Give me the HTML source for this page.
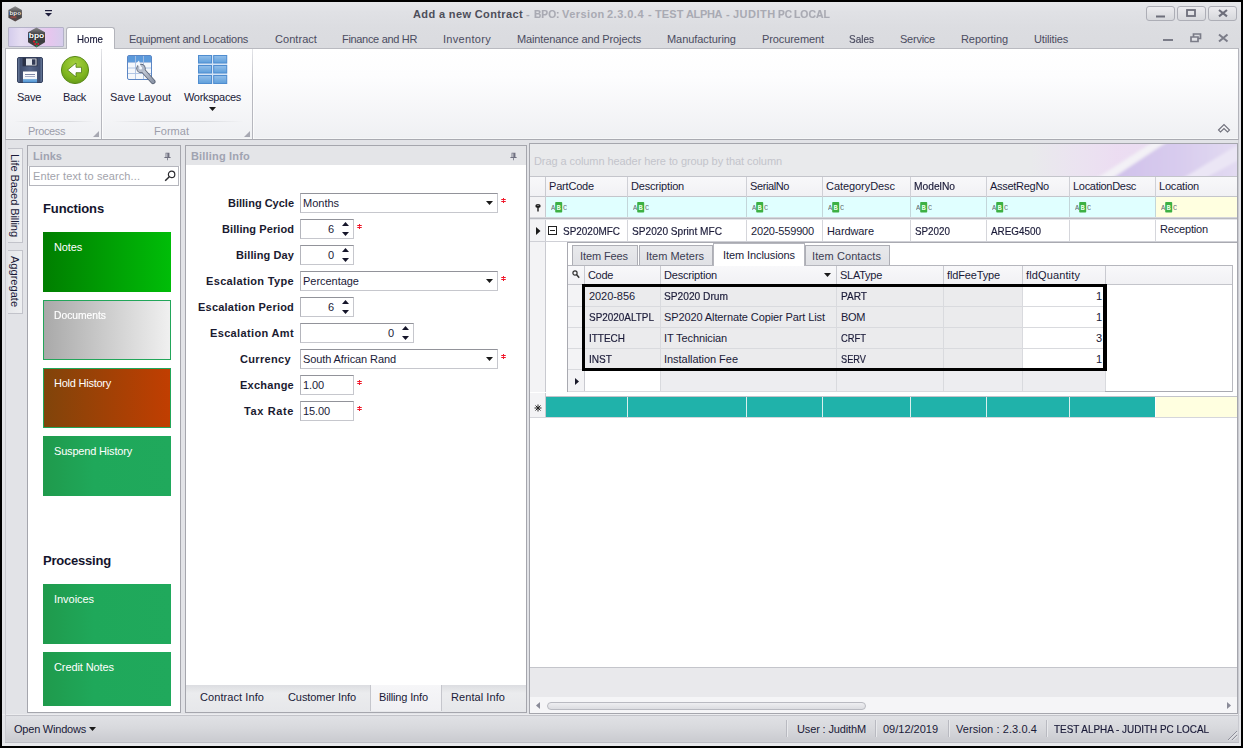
<!DOCTYPE html>
<html lang="en">
<head>
<meta charset="utf-8">
<title>Add a new Contract - BPO</title>
<style>
*{box-sizing:border-box;margin:0;padding:0}
html,body{width:1243px;height:748px;overflow:hidden}
body{background:#e2e3e7;font-family:"Liberation Sans",sans-serif;font-size:11px;line-height:13px;color:#1a1a38;position:relative}
section{position:absolute;left:0;top:0;width:1243px;height:748px}
div,span.t,svg{position:absolute}
.t{white-space:nowrap;line-height:13px}

</style>
</head>
<body>
<section id="frame">
<div style="left:0px;top:0px;width:1243px;height:2px;background:#000"></div>
<div style="left:0px;top:746px;width:1243px;height:2px;background:#000"></div>
<div style="left:0px;top:0px;width:2px;height:748px;background:#000"></div>
<div style="left:1241px;top:0px;width:2px;height:748px;background:#000"></div>
</section>
<section id="titlebar">
<div style="left:2px;top:2px;width:1239px;height:25px;background:linear-gradient(#e7e8eb,#e0e1e5 40%,#dcdde1)"></div>
<svg style="left:8px;top:6px" width="15" height="16" viewBox="0 0 15 16"><defs><linearGradient id="hx" x1="0" y1="0" x2="0" y2="1"><stop offset="0" stop-color="#8e8e90"/><stop offset=".35" stop-color="#58585a"/><stop offset=".7" stop-color="#454547"/><stop offset="1" stop-color="#5a4a4a"/></linearGradient></defs><path d="M7.200 .3 L13.900 4.100 V11.700 L7.200 15.600 L.4 11.700 V4.100 Z" fill="url(#hx)"/><rect x="1.200" y="6.300" width="12" height="2.600" fill="#2e2e30"/><text x="1.500" y="8.800" textLength="11.500" lengthAdjust="spacingAndGlyphs" font-family="Liberation Sans,sans-serif" font-weight="bold" font-size="5" fill="#f0f0f0">bpo</text><rect x="2.500" y="10.200" width="6" height="2" fill="#a04a42" opacity=".8"/></svg>
<svg style="left:44px;top:9px" width="9" height="9" viewBox="0 0 9 9"><rect x="1" y="1" width="7" height="1.2" fill="#1e1e3c"/><path d="M1 4h7L4.5 7.6z" fill="#1e1e3c"/></svg>
<span class="t" style="top:7.5px;left:413px;font-weight:bold;color:#4d4e5a;letter-spacing:0.37px;">Add a new Contract</span>
<span class="t" style="top:7.5px;left:526px;font-weight:bold;color:#a9aab3;white-space:pre;">- </span>
<span class="t" style="top:7.5px;left:534px;font-weight:bold;color:#a9aab3;white-space:pre;transform-origin:0 0;transform:scaleX(0.9273);-webkit-text-stroke:.18px;">BPO: </span>
<span class="t" style="top:7.5px;left:562px;font-weight:bold;color:#a9aab3;white-space:pre;letter-spacing:0.42px;">Version </span>
<span class="t" style="top:7.5px;left:607px;font-weight:bold;color:#a9aab3;white-space:pre;letter-spacing:0.48px;">2.3.0.4 </span>
<span class="t" style="top:7.5px;left:648px;font-weight:bold;color:#a9aab3;white-space:pre;">- </span>
<span class="t" style="top:7.5px;left:655px;font-weight:bold;color:#a9aab3;white-space:pre;letter-spacing:0.14px;">TEST </span>
<span class="t" style="top:7.5px;left:686px;font-weight:bold;color:#a9aab3;white-space:pre;letter-spacing:-0.36px;">ALPHA </span>
<span class="t" style="top:7.5px;left:726px;font-weight:bold;color:#a9aab3;white-space:pre;">- </span>
<span class="t" style="top:7.5px;left:733px;font-weight:bold;color:#a9aab3;white-space:pre;letter-spacing:0.49px;">JUDITH </span>
<span class="t" style="top:7.5px;left:778px;font-weight:bold;color:#a9aab3;white-space:pre;transform-origin:0 0;transform:scaleX(0.9162);-webkit-text-stroke:.18px;">PC </span>
<span class="t" style="top:7.5px;left:794px;font-weight:bold;color:#a9aab3;white-space:pre;transform-origin:0 0;transform:scaleX(0.9448);-webkit-text-stroke:.18px;">LOCAL</span>
<div style="left:1146px;top:6px;width:29px;height:15px;border:1px solid #adaeb6;border-radius:3px;background:linear-gradient(#ececef,#d7d8dc)"></div>
<div style="left:1177px;top:6px;width:29px;height:15px;border:1px solid #adaeb6;border-radius:3px;background:linear-gradient(#ececef,#d7d8dc)"></div>
<div style="left:1208px;top:6px;width:29px;height:15px;border:1px solid #adaeb6;border-radius:3px;background:linear-gradient(#ececef,#d7d8dc)"></div>
<svg style="left:1155px;top:9px" width="12" height="10" viewBox="0 0 12 10"><rect x="1" y="6.5" width="9" height="2" fill="#6d6e7a"/></svg>
<svg style="left:1185px;top:8px" width="12" height="10" viewBox="0 0 12 10"><rect x="2" y="2" width="8" height="6" fill="none" stroke="#6d6e7a" stroke-width="1.8"/></svg>
<svg style="left:1217px;top:8px" width="12" height="10" viewBox="0 0 12 10"><path d="M2 2l8 6.4M10 2l-8 6.4" stroke="#6d6e7a" stroke-width="2.1"/></svg>
</section>
<section id="ribbon-tabs">
<div style="left:2px;top:27px;width:1239px;height:21px;background:linear-gradient(#dcdde1,#dadbdf)"></div>
<div style="left:8px;top:27px;width:56px;height:20px;border:1px solid #b4b2c8;border-radius:1px;background:linear-gradient(90deg,#d4ccec,#e6def2 22%,#dfd3ee 50%,#e6c6ee 75%,#d6cdec)"></div>
<svg style="left:26.500px;top:26.500px" width="19" height="21" viewBox="0 0 19 21"><defs><linearGradient id="hx2" x1="0" y1="0" x2="0" y2="1"><stop offset="0" stop-color="#8a8a8c"/><stop offset=".3" stop-color="#4c4c4e"/><stop offset=".7" stop-color="#3c3c3e"/><stop offset="1" stop-color="#4a4a4c"/></linearGradient></defs><path d="M9.500 .4 L18 5.300 V15.300 L9.500 20.400 L1 15.300 V5.300 Z" fill="url(#hx2)"/><rect x="1.500" y="7.600" width="16" height="3.600" fill="#262628"/><text x="1.800" y="11.100" textLength="15.500" lengthAdjust="spacingAndGlyphs" font-family="Liberation Sans,sans-serif" font-weight="bold" font-size="6.500" fill="#fff">bpo</text><circle cx="7" cy="14.600" r="1.100" fill="#e0202c"/><circle cx="9.600" cy="15.200" r="1" fill="#2a9a5a"/><circle cx="8.300" cy="17" r="1.100" fill="#e0202c"/><circle cx="11.200" cy="17" r="1" fill="#e0202c"/><circle cx="9.800" cy="18.800" r=".9" fill="#2a9a5a"/></svg>
<div style="left:66px;top:27px;width:49px;height:22px;border:1px solid #b3b4bb;border-bottom:none;border-radius:3px 3px 0 0;background:#fff"></div>
<span class="t" style="top:33px;left:77px;transform-origin:0 0;transform:scaleX(0.8860);-webkit-text-stroke:.18px;">Home</span>
<span class="t" style="top:33px;left:129px;color:#4b4c60;letter-spacing:-0.22px;">Equipment and Locations</span>
<span class="t" style="top:33px;left:275px;color:#4b4c60;letter-spacing:0.05px;">Contract</span>
<span class="t" style="top:33px;left:342px;color:#4b4c60;letter-spacing:-0.32px;">Finance and HR</span>
<span class="t" style="top:33px;left:443px;color:#4b4c60;letter-spacing:0.31px;">Inventory</span>
<span class="t" style="top:33px;left:517px;color:#4b4c60;letter-spacing:-0.13px;">Maintenance and Projects</span>
<span class="t" style="top:33px;left:667px;color:#4b4c60;letter-spacing:-0.06px;">Manufacturing</span>
<span class="t" style="top:33px;left:762px;color:#4b4c60;letter-spacing:-0.09px;">Procurement</span>
<span class="t" style="top:33px;left:849px;color:#4b4c60;transform-origin:0 0;transform:scaleX(0.9081);-webkit-text-stroke:.18px;">Sales</span>
<span class="t" style="top:33px;left:900px;color:#4b4c60;letter-spacing:-0.24px;">Service</span>
<span class="t" style="top:33px;left:961px;color:#4b4c60;letter-spacing:-0.08px;">Reporting</span>
<span class="t" style="top:33px;left:1034px;color:#4b4c60;letter-spacing:-0.16px;">Utilities</span>
<svg style="left:1160px;top:31px" width="72" height="14" viewBox="0 0 72 14"><rect x="3" y="8" width="10" height="2" fill="#7b7c88"/><path d="M33.5 3h7v4.5h-7z" fill="none" stroke="#7b7c88" stroke-width="1.7"/><path d="M31 6h7v4.5h-7z" fill="#e1e2e6" stroke="#7b7c88" stroke-width="1.7"/><path d="M59 3.5l8.5 7M67.500 3.5l-8.500 7" stroke="#7b7c88" stroke-width="2"/></svg>
</section>
<section id="ribbon">
<div style="left:5px;top:48px;width:1234px;height:92px;border:1px solid #b3b4bb;border-top-color:#b9bac0;border-bottom-color:#a9aab1;background:linear-gradient(#fff,#fdfdfe 30%,#eff0f3)"></div>
<div style="left:6px;top:138px;width:1232px;height:1px;background:rgba(255,255,255,.45)"></div>
<div style="left:67px;top:48px;width:47px;height:1px;background:#fff"></div>
<div style="left:101px;top:49px;width:1px;height:90px;background:linear-gradient(#e4e5e9,#b9bac1 40%,#b5b6bd)"></div>
<div style="left:102px;top:49px;width:1px;height:90px;background:rgba(255,255,255,.7)"></div>
<div style="left:252px;top:49px;width:1px;height:90px;background:linear-gradient(#e4e5e9,#b9bac1 40%,#b5b6bd)"></div>
<div style="left:253px;top:49px;width:1px;height:90px;background:rgba(255,255,255,.7)"></div>
<div style="left:14px;top:121px;width:80px;height:1px;background:linear-gradient(90deg,rgba(215,216,222,0),#d9dade 30%,#d9dade 70%,rgba(215,216,222,0))"></div>
<div style="left:112px;top:121px;width:132px;height:1px;background:linear-gradient(90deg,rgba(215,216,222,0),#d9dade 30%,#d9dade 70%,rgba(215,216,222,0))"></div>
<span class="t" style="top:125px;left:28px;color:#9c9daa;letter-spacing:-0.39px;">Process</span>
<span class="t" style="top:125px;left:154px;color:#9c9daa;letter-spacing:0.03px;">Format</span>
<svg style="left:93px;top:131px" width="6" height="6" viewBox="0 0 6 6"><path d="M6 0V6H0z" fill="#a7a8b2"/></svg>
<svg style="left:244px;top:131px" width="6" height="6" viewBox="0 0 6 6"><path d="M6 0V6H0z" fill="#a7a8b2"/></svg>
<span class="t" style="top:91px;left:17px;letter-spacing:-0.27px;">Save</span>
<span class="t" style="top:91px;left:63px;letter-spacing:-0.37px;">Back</span>
<span class="t" style="top:91px;left:110px;">Save Layout</span>
<span class="t" style="top:91px;left:184px;letter-spacing:-0.33px;">Workspaces</span>
<svg style="left:209px;top:107px" width="7" height="4" viewBox="0 0 7 4"><path d="M0 0h7L3.5 4z" fill="#1a1a1a"/></svg>
<svg style="left:1217px;top:123px" width="14" height="12" viewBox="0 0 14 12"><path d="M1.500 7L7 1.500 12.500 7 10.500 9 7 5.500 3.500 9z" fill="#f4f4f6" stroke="#70717c" stroke-width="1.1"/></svg>
<svg style="left:17px;top:57px" width="26" height="26" viewBox="0 0 26 26"><defs><linearGradient id="fl" x1="0" y1="0" x2="1" y2="0"><stop offset="0" stop-color="#6f82a3"/><stop offset=".12" stop-color="#3f4d6e"/><stop offset=".5" stop-color="#56668a"/><stop offset=".88" stop-color="#3f4d6e"/><stop offset="1" stop-color="#6f82a3"/></linearGradient><linearGradient id="fl2" x1="0" y1="0" x2="0" y2="1"><stop offset="0" stop-color="#fff"/><stop offset=".65" stop-color="#f2f6fb"/><stop offset=".7" stop-color="#7fb4e2"/><stop offset="1" stop-color="#4a90d2"/></linearGradient></defs><rect x=".5" y=".5" width="25" height="25" rx="1.500" fill="url(#fl)" stroke="#35415f"/><rect x="5.500" y="0.8" width="15" height="8.500" fill="#2a3147"/><rect x="9" y="1.500" width="10.500" height="7" fill="#dfe3ea"/><rect x="15" y="2.300" width="3.500" height="5.500" fill="#333b55"/><rect x="6" y="14.500" width="14" height="11" fill="url(#fl2)"/><path d="M8 17.500h10" stroke="#7f88a8" stroke-width="1"/><path d="M8 19.500h10" stroke="#a9b0c8" stroke-width="1"/></svg>
<svg style="left:60px;top:55px" width="30" height="30" viewBox="0 0 30 30"><defs><radialGradient id="gb" cx=".5" cy=".3" r=".8"><stop offset="0" stop-color="#a6d141"/><stop offset=".6" stop-color="#7fb51f"/><stop offset="1" stop-color="#5a8f14"/></radialGradient></defs><circle cx="15" cy="15" r="13.600" fill="url(#gb)" stroke="#5b8a1b" stroke-width="1"/><path d="M7.500 15L16 8v4.300h5.500v5.400H16V22z" fill="#fff" stroke="#4c7a12" stroke-width=".8"/></svg>
<svg style="left:126px;top:54px" width="31" height="31" viewBox="0 0 31 31"><defs><linearGradient id="wr" x1="0" y1="0" x2="1" y2="1"><stop offset="0" stop-color="#c9d0dc"/><stop offset="1" stop-color="#8d96a8"/></linearGradient></defs><rect x="1.500" y="1.500" width="24" height="24" rx="1.500" fill="#f4f7fb" stroke="#5b86c5"/><rect x="2" y="2" width="23" height="6.500" fill="#5c9adb"/><path d="M2 8.500h23M2 14h23M2 19.500h23M9.500 2v23M17.500 2v23" stroke="#a9c0e2" stroke-width=".9"/><path d="M16.200 15.600L27 27.600" stroke="#5d6678" stroke-width="5" stroke-linecap="round"/><circle cx="15" cy="14.500" r="4.700" fill="#5d6678"/><path d="M16.200 15.600L27 27.600" stroke="url(#wr)" stroke-width="3.200" stroke-linecap="round"/><circle cx="15" cy="14.500" r="3.800" fill="#b4bccb"/><path d="M15.500 14.800L10 9.500l3-3z" fill="#f4f7fb"/><circle cx="14.600" cy="14" r="1.500" fill="#f4f7fb"/></svg>
<svg style="left:198px;top:55px" width="30" height="30" viewBox="0 0 30 30"><defs><linearGradient id="wsg" x1="0" y1="0" x2="0" y2="1"><stop offset="0" stop-color="#93bfea"/><stop offset="1" stop-color="#5f9fdb"/></linearGradient></defs><rect x="0" y="0" width="29.200" height="29" fill="#d4e3f5"/><rect x="0.5" y="0.5" width="13" height="7.5" fill="url(#wsg)" stroke="#4f8dd0" stroke-width="1"/><rect x="15.7" y="0.5" width="13" height="7.5" fill="url(#wsg)" stroke="#4f8dd0" stroke-width="1"/><rect x="0.5" y="10.5" width="13" height="7.5" fill="url(#wsg)" stroke="#4f8dd0" stroke-width="1"/><rect x="15.7" y="10.5" width="13" height="7.5" fill="url(#wsg)" stroke="#4f8dd0" stroke-width="1"/><rect x="0.5" y="20.5" width="13" height="8" fill="url(#wsg)" stroke="#4f8dd0" stroke-width="1"/><rect x="15.7" y="20.5" width="13" height="8" fill="url(#wsg)" stroke="#4f8dd0" stroke-width="1"/></svg>
</section>
<section id="autohide">
<div style="left:8px;top:148px;width:15px;height:95px;border:1px solid #c2c3ca;border-left:none;background:linear-gradient(90deg,#e6e7ea,#eeeff1)"></div>
<span class="t" style="left:21px;top:154px;transform-origin:0 0;transform:rotate(90deg);letter-spacing:-0.08px;">Life Based Billing</span>
<div style="left:8px;top:250px;width:15px;height:64px;border:1px solid #c2c3ca;border-left:none;background:linear-gradient(90deg,#e6e7ea,#eeeff1)"></div>
<span class="t" style="left:21px;top:256px;transform-origin:0 0;transform:rotate(90deg);letter-spacing:0.03px;">Aggregate</span>
</section>
<section id="links-panel">
<div style="left:27px;top:145px;width:154px;height:568px;border:1px solid #a5a6ad;background:#fff"></div>
<div style="left:28px;top:146px;width:152px;height:20px;background:#e4e5e8"></div>
<span class="t" style="top:150px;left:33px;font-weight:bold;color:#a0a3b1;letter-spacing:0.05px;">Links</span>
<svg style="left:164px;top:152px" width="7" height="8.500" viewBox="0 0 9 11"><path d="M2 1h5v5.500h1.500v1.200H5v3H4v-3H.5V6.500H2z" fill="#6f7080"/><rect x="3" y="1.800" width="1.300" height="4.700" fill="#d8d9de"/></svg>
<div style="left:29px;top:166px;width:150px;height:20px;border:1px solid #b5b6bd;background:#fff"></div>
<span class="t" style="top:170px;left:33px;color:#a2a3ab;letter-spacing:0.11px;">Enter text to search...</span>
<svg style="left:163px;top:169px" width="14" height="14" viewBox="0 0 14 14"><circle cx="8.600" cy="5.400" r="3.200" fill="none" stroke="#2a2a2e" stroke-width="1.200"/><path d="M6.300 7.700L2.200 11.800" stroke="#2a2a2e" stroke-width="1.500"/></svg>
<span class="t" style="top:201px;left:43px;font-size:13px;line-height:15px;font-weight:bold;color:#14142c;letter-spacing:-0.12px;">Functions</span>
<span class="t" style="top:553px;left:43px;font-size:13px;line-height:15px;font-weight:bold;color:#14142c;letter-spacing:-0.21px;">Processing</span>
<div style="left:43px;top:232px;width:128px;height:60px;background:linear-gradient(90deg,#007e00,#00bd08);"></div>
<span class="t" style="top:241px;left:54px;color:#fff;letter-spacing:-0.15px;">Notes</span>
<div style="left:43px;top:300px;width:128px;height:60px;background:linear-gradient(90deg,#a9a9a9,#f0f0f0);border:1px solid #22a65a;"></div>
<span class="t" style="top:309px;left:54px;color:#fff;transform-origin:0 0;transform:scaleX(0.9346);-webkit-text-stroke:.18px;">Documents</span>
<div style="left:43px;top:368px;width:128px;height:60px;background:linear-gradient(90deg,#80440a,#c13e01);border:1px solid #22a65a;"></div>
<span class="t" style="top:377px;left:54px;color:#fff;letter-spacing:-0.24px;">Hold History</span>
<div style="left:43px;top:436px;width:128px;height:60px;background:linear-gradient(90deg,#1f9a4c,#1fa85a 40%,#20a95c);"></div>
<span class="t" style="top:445px;left:54px;color:#fff;letter-spacing:-0.18px;">Suspend History</span>
<div style="left:43px;top:584px;width:128px;height:60px;background:linear-gradient(90deg,#1f9a4c,#1fa85a 40%,#20a95c);"></div>
<span class="t" style="top:593px;left:54px;color:#fff;letter-spacing:-0.04px;">Invoices</span>
<div style="left:43px;top:652px;width:128px;height:54px;background:linear-gradient(90deg,#1f9a4c,#1fa85a 40%,#20a95c);"></div>
<span class="t" style="top:661px;left:54px;color:#fff;letter-spacing:-0.10px;">Credit Notes</span>
</section>
<section id="billing-panel">
<div style="left:185px;top:145px;width:342px;height:568px;border:1px solid #a5a6ad;background:#fff"></div>
<div style="left:186px;top:146px;width:340px;height:19px;background:#e4e5e8"></div>
<span class="t" style="top:150px;left:191px;font-weight:bold;color:#a0a3b1;letter-spacing:0.18px;">Billing Info</span>
<svg style="left:510px;top:152px" width="7" height="8.500" viewBox="0 0 9 11"><path d="M2 1h5v5.500h1.500v1.200H5v3H4v-3H.5V6.500H2z" fill="#6f7080"/><rect x="3" y="1.800" width="1.300" height="4.700" fill="#d8d9de"/></svg>
<span class="t" style="top:197px;left:228px;font-weight:bold;color:#1a1a30;">Billing Cycle</span>
<div style="left:300px;top:193px;width:198px;height:20px;border:1px solid #c6c7cd;border-top-color:#92939a;border-left-color:#b4b5bc;background:#fff"></div>
<span class="t" style="top:197px;left:303px;">Months</span>
<svg style="left:486px;top:201px" width="7" height="4" viewBox="0 0 7 4"><path d="M0 0h7L3.500 4z" fill="#1a1a1a"/></svg>
<svg style="left:501px;top:198px" width="5" height="5" viewBox="0 0 5 5" shape-rendering="crispEdges"><path d="M2 0h1v5h-1zM1 1h3v1h-3zM1 3h3v1h-3z" fill="#f01828"/><path d="M0 1h1v1h-1zM4 1h1v1h-1zM0 3h1v1h-1zM4 3h1v1h-1z" fill="#f4505a"/><rect x="2" y="2" width="1" height="1" fill="#f23a6a"/></svg>
<span class="t" style="top:223px;left:222px;font-weight:bold;color:#1a1a30;letter-spacing:0.08px;">Billing Period</span>
<div style="left:300px;top:219px;width:54px;height:20px;border:1px solid #c6c7cd;border-top-color:#92939a;border-left-color:#b4b5bc;background:#fff"></div>
<span class="t" style="top:223px;left:0px;left:auto;right:909px;">6</span>
<svg style="left:342px;top:222px" width="7" height="14" viewBox="0 0 7 14"><path d="M0 4h7L3.500 0z" fill="#15152a"/><path d="M0 10h7L3.500 14z" fill="#15152a"/></svg>
<svg style="left:357px;top:224px" width="5" height="5" viewBox="0 0 5 5" shape-rendering="crispEdges"><path d="M2 0h1v5h-1zM1 1h3v1h-3zM1 3h3v1h-3z" fill="#f01828"/><path d="M0 1h1v1h-1zM4 1h1v1h-1zM0 3h1v1h-1zM4 3h1v1h-1z" fill="#f4505a"/><rect x="2" y="2" width="1" height="1" fill="#f23a6a"/></svg>
<span class="t" style="top:249px;left:236px;font-weight:bold;color:#1a1a30;letter-spacing:0.11px;">Billing Day</span>
<div style="left:300px;top:245px;width:54px;height:20px;border:1px solid #c6c7cd;border-top-color:#92939a;border-left-color:#b4b5bc;background:#fff"></div>
<span class="t" style="top:249px;left:0px;left:auto;right:909px;">0</span>
<svg style="left:342px;top:248px" width="7" height="14" viewBox="0 0 7 14"><path d="M0 4h7L3.500 0z" fill="#15152a"/><path d="M0 10h7L3.500 14z" fill="#15152a"/></svg>
<span class="t" style="top:275px;left:206px;font-weight:bold;color:#1a1a30;letter-spacing:0.34px;">Escalation Type</span>
<div style="left:300px;top:271px;width:198px;height:20px;border:1px solid #c6c7cd;border-top-color:#92939a;border-left-color:#b4b5bc;background:#fff"></div>
<span class="t" style="top:275px;left:303px;letter-spacing:-0.03px;">Percentage</span>
<svg style="left:486px;top:279px" width="7" height="4" viewBox="0 0 7 4"><path d="M0 0h7L3.500 4z" fill="#1a1a1a"/></svg>
<svg style="left:501px;top:276px" width="5" height="5" viewBox="0 0 5 5" shape-rendering="crispEdges"><path d="M2 0h1v5h-1zM1 1h3v1h-3zM1 3h3v1h-3z" fill="#f01828"/><path d="M0 1h1v1h-1zM4 1h1v1h-1zM0 3h1v1h-1zM4 3h1v1h-1z" fill="#f4505a"/><rect x="2" y="2" width="1" height="1" fill="#f23a6a"/></svg>
<span class="t" style="top:301px;left:198px;font-weight:bold;color:#1a1a30;letter-spacing:0.22px;">Escalation Period</span>
<div style="left:300px;top:297px;width:54px;height:20px;border:1px solid #c6c7cd;border-top-color:#92939a;border-left-color:#b4b5bc;background:#fff"></div>
<span class="t" style="top:301px;left:0px;left:auto;right:909px;">6</span>
<svg style="left:342px;top:300px" width="7" height="14" viewBox="0 0 7 14"><path d="M0 4h7L3.500 0z" fill="#15152a"/><path d="M0 10h7L3.500 14z" fill="#15152a"/></svg>
<span class="t" style="top:327px;left:210px;font-weight:bold;color:#1a1a30;letter-spacing:0.35px;">Escalation Amt</span>
<div style="left:300px;top:323px;width:114px;height:20px;border:1px solid #c6c7cd;border-top-color:#92939a;border-left-color:#b4b5bc;background:#fff"></div>
<span class="t" style="top:327px;left:0px;left:auto;right:849px;">0</span>
<svg style="left:402px;top:326px" width="7" height="14" viewBox="0 0 7 14"><path d="M0 4h7L3.500 0z" fill="#15152a"/><path d="M0 10h7L3.500 14z" fill="#15152a"/></svg>
<span class="t" style="top:353px;left:240px;font-weight:bold;color:#1a1a30;letter-spacing:0.34px;">Currency</span>
<div style="left:300px;top:349px;width:198px;height:20px;border:1px solid #c6c7cd;border-top-color:#92939a;border-left-color:#b4b5bc;background:#fff"></div>
<span class="t" style="top:353px;left:303px;letter-spacing:-0.10px;">South African Rand</span>
<svg style="left:486px;top:357px" width="7" height="4" viewBox="0 0 7 4"><path d="M0 0h7L3.500 4z" fill="#1a1a1a"/></svg>
<svg style="left:501px;top:354px" width="5" height="5" viewBox="0 0 5 5" shape-rendering="crispEdges"><path d="M2 0h1v5h-1zM1 1h3v1h-3zM1 3h3v1h-3z" fill="#f01828"/><path d="M0 1h1v1h-1zM4 1h1v1h-1zM0 3h1v1h-1zM4 3h1v1h-1z" fill="#f4505a"/><rect x="2" y="2" width="1" height="1" fill="#f23a6a"/></svg>
<span class="t" style="top:379px;left:240px;font-weight:bold;color:#1a1a30;letter-spacing:0.25px;">Exchange</span>
<div style="left:300px;top:375px;width:54px;height:20px;border:1px solid #c6c7cd;border-top-color:#92939a;border-left-color:#b4b5bc;background:#fff"></div>
<span class="t" style="top:379px;left:303px;letter-spacing:-0.11px;">1.00</span>
<svg style="left:357px;top:380px" width="5" height="5" viewBox="0 0 5 5" shape-rendering="crispEdges"><path d="M2 0h1v5h-1zM1 1h3v1h-3zM1 3h3v1h-3z" fill="#f01828"/><path d="M0 1h1v1h-1zM4 1h1v1h-1zM0 3h1v1h-1zM4 3h1v1h-1z" fill="#f4505a"/><rect x="2" y="2" width="1" height="1" fill="#f23a6a"/></svg>
<span class="t" style="top:405px;left:244px;font-weight:bold;color:#1a1a30;letter-spacing:0.62px;">Tax Rate</span>
<div style="left:300px;top:401px;width:54px;height:20px;border:1px solid #c6c7cd;border-top-color:#92939a;border-left-color:#b4b5bc;background:#fff"></div>
<span class="t" style="top:405px;left:303px;letter-spacing:-0.11px;">15.00</span>
<svg style="left:357px;top:406px" width="5" height="5" viewBox="0 0 5 5" shape-rendering="crispEdges"><path d="M2 0h1v5h-1zM1 1h3v1h-3zM1 3h3v1h-3z" fill="#f01828"/><path d="M0 1h1v1h-1zM4 1h1v1h-1zM0 3h1v1h-1zM4 3h1v1h-1z" fill="#f4505a"/><rect x="2" y="2" width="1" height="1" fill="#f23a6a"/></svg>
<div style="left:186px;top:685px;width:340px;height:27px;background:linear-gradient(#dcdde1,#ebecee 30%,#e6e7ea)"></div>
<div style="left:370px;top:685px;width:72px;height:26px;background:linear-gradient(#f6f6f8,#f0f0f3);border-left:1px solid #c5c6cc;border-right:1px solid #c5c6cc"></div>
<span class="t" style="top:691px;left:200px;letter-spacing:0.08px;">Contract Info</span>
<span class="t" style="top:691px;left:288px;letter-spacing:-0.08px;">Customer Info</span>
<span class="t" style="top:691px;left:379px;letter-spacing:-0.15px;">Billing Info</span>
<span class="t" style="top:691px;left:451px;letter-spacing:0.07px;">Rental Info</span>
</section>
<section id="grid-panel">
<div style="left:529px;top:143px;width:709px;height:571px;border:1px solid #a5a6ad;background:#fff"></div>
<div style="left:530px;top:144px;width:707px;height:32px;background:#e9eaec"></div>
<svg style="left:1000px;top:144px" width="237" height="32" viewBox="0 0 237 32"><defs><linearGradient id="sw" x1="0" y1="0" x2="1" y2="0"><stop offset="0" stop-color="#ecdff3" stop-opacity="0"/><stop offset=".22" stop-color="#ecdff3" stop-opacity=".6"/><stop offset=".42" stop-color="#ecdcf2" stop-opacity=".95"/><stop offset="1" stop-color="#e6def2" stop-opacity=".9"/></linearGradient><linearGradient id="sw2" x1="0" y1="0" x2="1" y2="0"><stop offset="0" stop-color="#cfc0ea"/><stop offset=".5" stop-color="#d9cdee"/><stop offset="1" stop-color="#e6e0f3"/></linearGradient><filter id="bl" x="-10%" y="-30%" width="120%" height="160%"><feGaussianBlur stdDeviation="1.600"/></filter><clipPath id="cp"><rect x="0" y="0" width="237" height="32"/></clipPath></defs><g clip-path="url(#cp)"><rect x="30" y="0" width="207" height="32" fill="url(#sw)"/><g filter="url(#bl)"><path d="M94 36L156 -4h14L110 36z" fill="#f3f1f6"/><path d="M110 36L170 -4H260V36z" fill="url(#sw2)"/><path d="M180 36L236 2h10v10L202 36z" fill="#ebe6f5"/></g></g></svg>
<span class="t" style="top:155px;left:534px;color:#c3c4cb;letter-spacing:-0.08px;">Drag a column header here to group by that column</span>
<div style="left:530px;top:176px;width:707px;height:1px;background:#c4c5cb"></div>
<div style="left:530px;top:177px;width:707px;height:19px;background:linear-gradient(#f8f8fa,#f1f1f4)"></div>
<div style="left:530px;top:196px;width:707px;height:1px;background:#c4c5cb"></div>
<div style="left:545px;top:177px;width:1px;height:20px;background:#c9cad0"></div>
<span class="t" style="top:180px;left:549px;letter-spacing:-0.19px;">PartCode</span>
<div style="left:627px;top:177px;width:1px;height:20px;background:#cfd0d6"></div>
<span class="t" style="top:180px;left:631px;letter-spacing:-0.18px;">Description</span>
<div style="left:746px;top:177px;width:1px;height:20px;background:#cfd0d6"></div>
<span class="t" style="top:180px;left:750px;letter-spacing:-0.40px;">SerialNo</span>
<div style="left:822px;top:177px;width:1px;height:20px;background:#cfd0d6"></div>
<span class="t" style="top:180px;left:826px;letter-spacing:-0.06px;">CategoryDesc</span>
<div style="left:910px;top:177px;width:1px;height:20px;background:#cfd0d6"></div>
<span class="t" style="top:180px;left:914px;transform-origin:0 0;transform:scaleX(0.9312);-webkit-text-stroke:.18px;">ModelNo</span>
<div style="left:986px;top:177px;width:1px;height:20px;background:#cfd0d6"></div>
<span class="t" style="top:180px;left:990px;letter-spacing:-0.28px;">AssetRegNo</span>
<div style="left:1069px;top:177px;width:1px;height:20px;background:#cfd0d6"></div>
<span class="t" style="top:180px;left:1073px;letter-spacing:-0.30px;">LocationDesc</span>
<div style="left:1155px;top:177px;width:1px;height:20px;background:#cfd0d6"></div>
<span class="t" style="top:180px;left:1159px;letter-spacing:-0.20px;">Location</span>
<div style="left:530px;top:197px;width:16px;height:20px;background:#f3f3f5"></div>
<div style="left:545px;top:197px;width:1px;height:20px;background:#c9cad0"></div>
<div style="left:546px;top:197px;width:609px;height:20px;background:#e0ffff"></div>
<div style="left:1156px;top:197px;width:81px;height:20px;background:#ffffe0"></div>
<svg style="left:551px;top:202px" width="16" height="11" viewBox="0 0 16 11"><rect x="4.200" y="0" width="7" height="10.500" rx=".8" fill="#3cb043"/><text x="0" y="8" font-family="Liberation Mono,monospace" font-size="7" fill="#5c6a6a">A</text><text x="5.600" y="8" font-family="Liberation Mono,monospace" font-size="7" font-weight="bold" fill="#e8ffe8">B</text><text x="12" y="8" font-family="Liberation Mono,monospace" font-size="7" fill="#5c6a6a">C</text></svg>
<div style="left:627px;top:197px;width:1px;height:20px;background:#c3d6da"></div>
<svg style="left:633px;top:202px" width="16" height="11" viewBox="0 0 16 11"><rect x="4.200" y="0" width="7" height="10.500" rx=".8" fill="#3cb043"/><text x="0" y="8" font-family="Liberation Mono,monospace" font-size="7" fill="#5c6a6a">A</text><text x="5.600" y="8" font-family="Liberation Mono,monospace" font-size="7" font-weight="bold" fill="#e8ffe8">B</text><text x="12" y="8" font-family="Liberation Mono,monospace" font-size="7" fill="#5c6a6a">C</text></svg>
<div style="left:746px;top:197px;width:1px;height:20px;background:#c3d6da"></div>
<svg style="left:752px;top:202px" width="16" height="11" viewBox="0 0 16 11"><rect x="4.200" y="0" width="7" height="10.500" rx=".8" fill="#3cb043"/><text x="0" y="8" font-family="Liberation Mono,monospace" font-size="7" fill="#5c6a6a">A</text><text x="5.600" y="8" font-family="Liberation Mono,monospace" font-size="7" font-weight="bold" fill="#e8ffe8">B</text><text x="12" y="8" font-family="Liberation Mono,monospace" font-size="7" fill="#5c6a6a">C</text></svg>
<div style="left:822px;top:197px;width:1px;height:20px;background:#c3d6da"></div>
<svg style="left:828px;top:202px" width="16" height="11" viewBox="0 0 16 11"><rect x="4.200" y="0" width="7" height="10.500" rx=".8" fill="#3cb043"/><text x="0" y="8" font-family="Liberation Mono,monospace" font-size="7" fill="#5c6a6a">A</text><text x="5.600" y="8" font-family="Liberation Mono,monospace" font-size="7" font-weight="bold" fill="#e8ffe8">B</text><text x="12" y="8" font-family="Liberation Mono,monospace" font-size="7" fill="#5c6a6a">C</text></svg>
<div style="left:910px;top:197px;width:1px;height:20px;background:#c3d6da"></div>
<svg style="left:916px;top:202px" width="16" height="11" viewBox="0 0 16 11"><rect x="4.200" y="0" width="7" height="10.500" rx=".8" fill="#3cb043"/><text x="0" y="8" font-family="Liberation Mono,monospace" font-size="7" fill="#5c6a6a">A</text><text x="5.600" y="8" font-family="Liberation Mono,monospace" font-size="7" font-weight="bold" fill="#e8ffe8">B</text><text x="12" y="8" font-family="Liberation Mono,monospace" font-size="7" fill="#5c6a6a">C</text></svg>
<div style="left:986px;top:197px;width:1px;height:20px;background:#c3d6da"></div>
<svg style="left:992px;top:202px" width="16" height="11" viewBox="0 0 16 11"><rect x="4.200" y="0" width="7" height="10.500" rx=".8" fill="#3cb043"/><text x="0" y="8" font-family="Liberation Mono,monospace" font-size="7" fill="#5c6a6a">A</text><text x="5.600" y="8" font-family="Liberation Mono,monospace" font-size="7" font-weight="bold" fill="#e8ffe8">B</text><text x="12" y="8" font-family="Liberation Mono,monospace" font-size="7" fill="#5c6a6a">C</text></svg>
<div style="left:1069px;top:197px;width:1px;height:20px;background:#c3d6da"></div>
<svg style="left:1075px;top:202px" width="16" height="11" viewBox="0 0 16 11"><rect x="4.200" y="0" width="7" height="10.500" rx=".8" fill="#3cb043"/><text x="0" y="8" font-family="Liberation Mono,monospace" font-size="7" fill="#5c6a6a">A</text><text x="5.600" y="8" font-family="Liberation Mono,monospace" font-size="7" font-weight="bold" fill="#e8ffe8">B</text><text x="12" y="8" font-family="Liberation Mono,monospace" font-size="7" fill="#5c6a6a">C</text></svg>
<div style="left:1155px;top:197px;width:1px;height:20px;background:#c3d6da"></div>
<svg style="left:1161px;top:202px" width="16" height="11" viewBox="0 0 16 11"><rect x="4.200" y="0" width="7" height="10.500" rx=".8" fill="#3cb043"/><text x="0" y="8" font-family="Liberation Mono,monospace" font-size="7" fill="#5c6a6a">A</text><text x="5.600" y="8" font-family="Liberation Mono,monospace" font-size="7" font-weight="bold" fill="#e8ffe8">B</text><text x="12" y="8" font-family="Liberation Mono,monospace" font-size="7" fill="#5c6a6a">C</text></svg>
<svg style="left:534.500px;top:204px" width="6" height="8" viewBox="0 0 6 8"><ellipse cx="3" cy="1.900" rx="2.700" ry="1.900" fill="#1a1a1a"/><ellipse cx="3" cy="1.300" rx="1.300" ry=".5" fill="#8a8a8a"/><path d="M3 3v4.500" stroke="#1a1a1a" stroke-width="1.400"/></svg>
<div style="left:530px;top:217px;width:707px;height:1px;background:#d5d6db"></div>
<div style="left:530px;top:218px;width:707px;height:1px;background:#b9bac1"></div>
<div style="left:530px;top:219px;width:707px;height:1px;background:#e4e5e9"></div>
<div style="left:530px;top:220px;width:15px;height:172px;background:#f3f3f5"></div>
<div style="left:545px;top:220px;width:1px;height:172px;background:#c9cad0"></div>
<div style="left:530px;top:241px;width:707px;height:1px;background:#cfd0d6"></div>
<div style="left:627px;top:220px;width:1px;height:21px;background:#d5d6db"></div>
<div style="left:746px;top:220px;width:1px;height:21px;background:#d5d6db"></div>
<div style="left:822px;top:220px;width:1px;height:21px;background:#d5d6db"></div>
<div style="left:910px;top:220px;width:1px;height:21px;background:#d5d6db"></div>
<div style="left:986px;top:220px;width:1px;height:21px;background:#d5d6db"></div>
<div style="left:1069px;top:220px;width:1px;height:21px;background:#d5d6db"></div>
<div style="left:1155px;top:220px;width:1px;height:21px;background:#d5d6db"></div>
<svg style="left:536px;top:227px" width="5" height="8" viewBox="0 0 5 8"><path d="M0 0v8l4.500-4z" fill="#1a1a1a"/></svg>
<svg style="left:548px;top:226px" width="9" height="9" viewBox="0 0 9 9"><rect x=".5" y=".5" width="8" height="8" fill="#fff" stroke="#222"/><path d="M2 4.500h5" stroke="#222"/></svg>
<span class="t" style="top:225px;left:563px;transform-origin:0 0;transform:scaleX(0.9050);-webkit-text-stroke:.18px;">SP2020MFC</span>
<span class="t" style="top:225px;left:632px;transform-origin:0 0;transform:scaleX(0.9200);-webkit-text-stroke:.18px;">SP2020 Sprint MFC</span>
<span class="t" style="top:225px;left:751px;letter-spacing:-0.17px;">2020-559900</span>
<span class="t" style="top:225px;left:827px;letter-spacing:-0.09px;">Hardware</span>
<span class="t" style="top:225px;left:915px;transform-origin:0 0;transform:scaleX(0.8939);-webkit-text-stroke:.18px;">SP2020</span>
<span class="t" style="top:225px;left:991px;transform-origin:0 0;transform:scaleX(0.8984);-webkit-text-stroke:.18px;">AREG4500</span>
<span class="t" style="top:223px;left:1160px;letter-spacing:-0.17px;">Reception</span>
<div style="left:567px;top:242px;width:670px;height:150px;border:1px solid #a9aab1;border-right:none;background:#fff"></div>
<div style="left:1232px;top:265px;width:1px;height:127px;background:#b9bac0"></div>
<div style="left:1233px;top:266px;width:4px;height:126px;background:#fff"></div>
<div style="left:568px;top:265px;width:664px;height:1px;background:#b5b6bd"></div>
<div style="left:572px;top:245px;width:66px;height:20px;border:1px solid #adaeb5;border-bottom:none;background:linear-gradient(#e8e9ec,#e0e1e5)"></div>
<span class="t" style="top:250px;left:580px;color:#3c3d52;letter-spacing:-0.10px;">Item Fees</span>
<div style="left:639px;top:245px;width:74px;height:20px;border:1px solid #adaeb5;border-bottom:none;background:linear-gradient(#e8e9ec,#e0e1e5)"></div>
<span class="t" style="top:250px;left:646px;color:#3c3d52;">Item Meters</span>
<div style="left:805px;top:245px;width:85px;height:20px;border:1px solid #adaeb5;border-bottom:none;background:linear-gradient(#e8e9ec,#e0e1e5)"></div>
<span class="t" style="top:250px;left:812px;color:#3c3d52;letter-spacing:0.09px;">Item Contacts</span>
<div style="left:713px;top:243px;width:92px;height:23px;border:1px solid #b5b6bd;border-bottom:none;background:#fff"></div>
<span class="t" style="top:249px;left:723px;letter-spacing:-0.09px;">Item Inclusions</span>
<div style="left:568px;top:266px;width:664px;height:18px;background:linear-gradient(#f8f8fa,#f1f1f4)"></div>
<div style="left:568px;top:284px;width:664px;height:1px;background:#c4c5cb"></div>
<div style="left:584px;top:266px;width:1px;height:125px;background:#c9cad0"></div>
<div style="left:568px;top:285px;width:16px;height:106px;background:#f3f3f5"></div>
<span class="t" style="top:269px;left:588px;letter-spacing:-0.32px;">Code</span>
<div style="left:660px;top:266px;width:1px;height:19px;background:#c9cad0"></div>
<span class="t" style="top:269px;left:664px;letter-spacing:-0.18px;">Description</span>
<div style="left:836px;top:266px;width:1px;height:19px;background:#c9cad0"></div>
<span class="t" style="top:269px;left:840px;letter-spacing:-0.26px;">SLAType</span>
<div style="left:943px;top:266px;width:1px;height:19px;background:#c9cad0"></div>
<span class="t" style="top:269px;left:947px;letter-spacing:-0.14px;">fldFeeType</span>
<div style="left:1022px;top:266px;width:1px;height:19px;background:#c9cad0"></div>
<span class="t" style="top:269px;left:1026px;letter-spacing:0.13px;">fldQuantity</span>
<div style="left:1105px;top:266px;width:1px;height:19px;background:#c9cad0"></div>
<svg style="left:572px;top:270px" width="8" height="9" viewBox="0 0 8 9"><circle cx="3" cy="3" r="2.100" fill="none" stroke="#333" stroke-width="1.200"/><path d="M4.500 4.600L7.200 7.800" stroke="#333" stroke-width="1.500"/></svg>
<svg style="left:824px;top:273px" width="7" height="4" viewBox="0 0 7 4"><path d="M0 0h7L3.500 4z" fill="#1a1a1a"/></svg>
<div style="left:585px;top:285px;width:438px;height:85px;background:#ebebed"></div>
<div style="left:1023px;top:285px;width:82px;height:85px;background:#fff"></div>
<span class="t" style="top:290px;left:589px;letter-spacing:-0.06px;">2020-856</span>
<span class="t" style="top:290px;left:664px;transform-origin:0 0;transform:scaleX(0.9263);-webkit-text-stroke:.18px;">SP2020 Drum</span>
<span class="t" style="top:290px;left:841px;transform-origin:0 0;transform:scaleX(0.9178);-webkit-text-stroke:.18px;">PART</span>
<span class="t" style="top:290px;left:0px;left:auto;right:141px;">1</span>
<div style="left:568px;top:306px;width:537px;height:1px;background:#d9dade"></div>
<span class="t" style="top:311px;left:589px;transform-origin:0 0;transform:scaleX(0.9032);-webkit-text-stroke:.18px;">SP2020ALTPL</span>
<span class="t" style="top:311px;left:664px;letter-spacing:-0.11px;">SP2020 Alternate Copier Part List</span>
<span class="t" style="top:311px;left:841px;letter-spacing:-0.35px;">BOM</span>
<span class="t" style="top:311px;left:0px;left:auto;right:141px;">1</span>
<div style="left:568px;top:327px;width:537px;height:1px;background:#d9dade"></div>
<span class="t" style="top:332px;left:589px;transform-origin:0 0;transform:scaleX(0.9060);-webkit-text-stroke:.18px;">ITTECH</span>
<span class="t" style="top:332px;left:664px;letter-spacing:-0.11px;">IT Technician</span>
<span class="t" style="top:332px;left:841px;transform-origin:0 0;transform:scaleX(0.8524);-webkit-text-stroke:.18px;">CRFT</span>
<span class="t" style="top:332px;left:0px;left:auto;right:141px;">3</span>
<div style="left:568px;top:348px;width:537px;height:1px;background:#d9dade"></div>
<span class="t" style="top:353px;left:589px;transform-origin:0 0;transform:scaleX(0.9177);-webkit-text-stroke:.18px;">INST</span>
<span class="t" style="top:353px;left:664px;letter-spacing:-0.04px;">Installation Fee</span>
<span class="t" style="top:353px;left:841px;transform-origin:0 0;transform:scaleX(0.8399);-webkit-text-stroke:.18px;">SERV</span>
<span class="t" style="top:353px;left:0px;left:auto;right:141px;">1</span>
<div style="left:568px;top:369px;width:537px;height:1px;background:#d9dade"></div>
<div style="left:660px;top:285px;width:1px;height:106px;background:#d9dade"></div>
<div style="left:836px;top:285px;width:1px;height:106px;background:#d9dade"></div>
<div style="left:943px;top:285px;width:1px;height:106px;background:#d9dade"></div>
<div style="left:1022px;top:285px;width:1px;height:106px;background:#d9dade"></div>
<div style="left:1105px;top:285px;width:1px;height:106px;background:#d9dade"></div>
<div style="left:585px;top:371px;width:75px;height:20px;background:#fff"></div>
<div style="left:661px;top:371px;width:444px;height:20px;background:#ededf0"></div>
<div style="left:836px;top:371px;width:1px;height:20px;background:#d9dade"></div>
<div style="left:943px;top:371px;width:1px;height:20px;background:#d9dade"></div>
<div style="left:1022px;top:371px;width:1px;height:20px;background:#d9dade"></div>
<div style="left:568px;top:391px;width:537px;height:1px;background:#d9dade"></div>
<svg style="left:575px;top:377.500px" width="4" height="7" viewBox="0 0 4 7"><path d="M0 0v7l4-3.500z" fill="#1a1a2a"/></svg>
<div style="left:582px;top:284px;width:525px;height:87px;border:3px solid #000;border-right-width:4px;background:transparent"></div>
<div style="left:530px;top:396px;width:16px;height:1px;background:#cfd0d6"></div>
<div style="left:546px;top:396px;width:691px;height:1px;background:#c3c4ca"></div>
<div style="left:530px;top:393px;width:15px;height:24px;background:#f3f3f5"></div>
<div style="left:545px;top:393px;width:1px;height:24px;background:#c9cad0"></div>
<div style="left:546px;top:397px;width:609px;height:20px;background:#20b2aa"></div>
<div style="left:1156px;top:397px;width:81px;height:20px;background:#ffffe0"></div>
<div style="left:627px;top:397px;width:1px;height:20px;background:#d9f0ee"></div>
<div style="left:746px;top:397px;width:1px;height:20px;background:#d9f0ee"></div>
<div style="left:822px;top:397px;width:1px;height:20px;background:#d9f0ee"></div>
<div style="left:910px;top:397px;width:1px;height:20px;background:#d9f0ee"></div>
<div style="left:986px;top:397px;width:1px;height:20px;background:#d9f0ee"></div>
<div style="left:1069px;top:397px;width:1px;height:20px;background:#d9f0ee"></div>
<div style="left:530px;top:417px;width:707px;height:1px;background:#d5d6db"></div>
<svg style="left:534px;top:404px" width="8" height="8" viewBox="0 0 8 8"><path d="M4 .5v7M.5 4h7M1.500 1.500l5 5M6.500 1.500l-5 5" stroke="#222" stroke-width="1"/></svg>
<div style="left:530px;top:667px;width:707px;height:1px;background:#c4c5cb"></div>
<div style="left:530px;top:668px;width:707px;height:29px;background:#e9e9ec"></div>
<div style="left:530px;top:697px;width:707px;height:16px;background:#f5f5f7"></div>
<div style="left:547px;top:702px;width:319px;height:8px;border:1px solid #b9bac1;border-radius:4px;background:linear-gradient(#eeeef1,#dcdde1)"></div>
<svg style="left:536px;top:702px" width="4" height="7" viewBox="0 0 4 7"><path d="M4 0v7L0 3.500z" fill="#8a8b98"/></svg>
<svg style="left:1227px;top:702px" width="4" height="7" viewBox="0 0 4 7"><path d="M0 0v7L4 3.500z" fill="#8a8b98"/></svg>
</section>
<section id="statusbar">
<div style="left:2px;top:714px;width:1239px;height:1px;background:#ececef"></div>
<div style="left:5px;top:715px;width:1234px;height:1px;background:#c3c4ca"></div>
<div style="left:6px;top:716px;width:1232px;height:26px;background:linear-gradient(#e0e1e5,#d8d9dd 45%,#cccdd2 90%,#d0d1d6)"></div>
<div style="left:5px;top:742px;width:1234px;height:1px;background:#bcbdc4"></div>
<div style="left:2px;top:743px;width:1239px;height:3px;background:#e9eaed"></div>
<div style="left:5px;top:140px;width:1px;height:602px;background:#c9cad0"></div>
<div style="left:1238px;top:140px;width:1px;height:602px;background:#c9cad0"></div>
<span class="t" style="top:723px;left:14px;letter-spacing:-0.22px;">Open Windows</span>
<svg style="left:89px;top:727px" width="7" height="4" viewBox="0 0 7 4"><path d="M0 0h7L3.500 4z" fill="#1a1a1a"/></svg>
<div style="left:786px;top:720px;width:1px;height:17px;background:#b9bac1"></div>
<div style="left:787px;top:720px;width:1px;height:17px;background:#e8e9ec"></div>
<div style="left:875px;top:720px;width:1px;height:17px;background:#b9bac1"></div>
<div style="left:876px;top:720px;width:1px;height:17px;background:#e8e9ec"></div>
<div style="left:948px;top:720px;width:1px;height:17px;background:#b9bac1"></div>
<div style="left:949px;top:720px;width:1px;height:17px;background:#e8e9ec"></div>
<div style="left:1046px;top:720px;width:1px;height:17px;background:#b9bac1"></div>
<div style="left:1047px;top:720px;width:1px;height:17px;background:#e8e9ec"></div>
<span class="t" style="top:723px;left:797px;letter-spacing:-0.14px;">User : JudithM</span>
<span class="t" style="top:723px;left:883px;">09/12/2019</span>
<span class="t" style="top:723px;left:956px;letter-spacing:0.09px;">Version : 2.3.0.4</span>
<span class="t" style="top:723px;left:1054px;transform-origin:0 0;transform:scaleX(0.9002);-webkit-text-stroke:.18px;">TEST ALPHA - JUDITH PC LOCAL</span>
<svg style="left:1226px;top:729px" width="12" height="12" viewBox="0 0 12 12"><path d="M11 2L2 11M11 6L6 11" stroke="#8e8f9a" stroke-width="1"/><path d="M11.500 3L3 11.500M11.500 7L7 11.500" stroke="#f4f4f6" stroke-width=".8"/></svg>
</section>
</body>
</html>
